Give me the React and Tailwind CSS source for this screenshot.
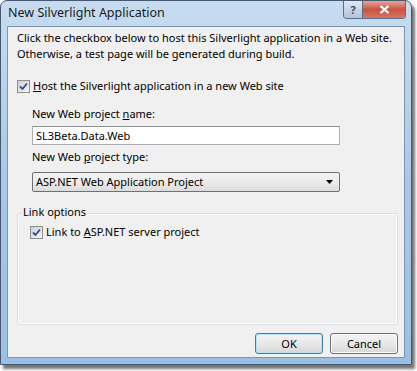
const FONT = { fontFamily: '"Segoe UI", "Noto Sans", "Open Sans", sans-serif' }

function Check() {
  return (
    <span className="flex h-[13px] w-[13px] shrink-0 items-center justify-center border border-[#8e8f8f] bg-gradient-to-br from-[#cbcfd5] to-[#f6f6f6]">
      <svg width="9" height="9" viewBox="0 0 9 9">
        <path d="M1 4.5 L3.5 7 L8 1.5" fill="none" stroke="#2a4f8c" strokeWidth="1.8" />
      </svg>
    </span>
  )
}

function Btn({ label, primary }) {
  return (
    <button
      className={`flex h-[21px] w-[68px] items-center justify-center rounded-[3px] border bg-gradient-to-b from-[#f4f4f4] via-[#e8e8e8] to-[#d7d7d7] text-[11px] text-black ${
        primary ? 'border-[#3c7fb1] shadow-[inset_0_0_0_1px_#b6e3f8]' : 'border-[#707070] shadow-[inset_0_0_0_1px_#fcfcfc]'
      }`}
    >
      {label}
    </button>
  )
}

export default function App() {
  return (
    <div className="h-[371px] w-[417px] bg-white" style={FONT}>
      <div className="flex h-[365px] w-[412px] flex-col rounded-t-[7px] border border-[#45586e] bg-gradient-to-b from-[#c7dcf0] via-[#a9c8e6] to-[#9cc0e3] shadow-[3px_4px_3px_rgba(0,0,0,0.55)]">
        {/* title bar */}
        <div className="flex h-[25px] shrink-0 items-start justify-between pl-[7px] pr-[5px]">
          <span className="mt-[4px] text-[12.5px] leading-[16px] text-[#1b1b1b]">New Silverlight Application</span>
          <div className="flex h-[18px] overflow-hidden rounded-b-[4px] border border-t-0 border-[#5d6f86]">
            <div className="flex w-[18px] items-center justify-center bg-gradient-to-b from-[#dfe9f4] to-[#aec3da] text-[11px] font-bold leading-none text-[#3d4d62]">
              ?
            </div>
            <div className="flex w-[43px] items-center justify-center border-l border-[#5d6f86] bg-gradient-to-b from-[#e5a69b] via-[#c9533f] to-[#d77566]">
              <svg width="11" height="9" viewBox="0 0 11 9">
                <path d="M1.5 1 L9.5 8 M9.5 1 L1.5 8" stroke="white" strokeWidth="2.2" />
              </svg>
            </div>
          </div>
        </div>

        {/* client area */}
        <div className="mx-[6px] mb-[6px] flex flex-1 flex-col border border-[#7f95ad] bg-[#f0f0f0] px-[9px] pt-[3px] text-[11px] leading-[16px] text-black">
          <p>
            Click the checkbox below to host this Silverlight application in a Web site.
            <br />
            Otherwise, a test page will be generated during build.
          </p>

          <div className="mt-[16px] flex items-center gap-[3px]">
            <Check />
            <span>
              <u>H</u>ost the Silverlight application in a new Web site
            </span>
          </div>

          <div className="pl-[15px]">
            <p className="mt-[12px]">
              New Web project <u>n</u>ame:
            </p>
            <div className="mt-[4px] flex h-[19px] w-[308px] items-center border border-[#abadb3] border-t-[#8e9196] bg-white pl-[3px]">
              SL3Beta.Data.Web
            </div>
            <p className="mt-[4px]">
              New Web <u>p</u>roject type:
            </p>
            <div className="mt-[7px] flex h-[20px] w-[308px] items-center justify-between rounded-[2px] border border-[#707070] bg-gradient-to-b from-[#f3f3f3] via-[#ebebeb] to-[#dcdcdc] pl-[3px] pr-[6px]">
              <span>ASP.NET Web Application Project</span>
              <svg width="7" height="4" viewBox="0 0 7 4">
                <path d="M0 0 L7 0 L3.5 4 Z" fill="#000" />
              </svg>
            </div>
          </div>

          {/* group box */}
          <div className="relative mt-[21px] h-[112px] w-[381px] shrink-0 rounded-[3px] border border-[#d5dfe5] shadow-[inset_0_0_0_1px_#ffffff]">
            <span className="absolute -top-[10px] left-[4px] bg-[#f0f0f0] px-[1px]">Link options</span>
            <div className="ml-[12px] mt-[10px] flex items-center gap-[3px]">
              <Check />
              <span>
                Link to <u>A</u>SP.NET server project
              </span>
            </div>
          </div>

          <div className="mt-[8px] flex w-[381px] shrink-0 justify-end gap-[7px]">
            <Btn label="OK" primary />
            <Btn label="Cancel" />
          </div>
        </div>
      </div>
    </div>
  )
}
